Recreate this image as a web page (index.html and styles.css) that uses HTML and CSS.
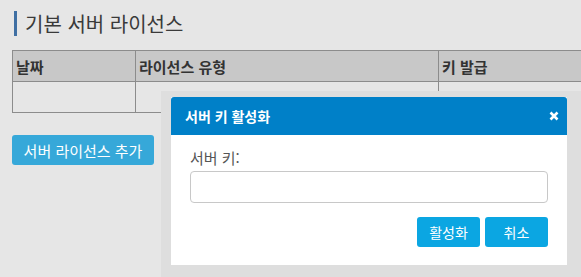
FILE: index.html
```html
<!DOCTYPE html>
<html lang="ko">

<head>
    <meta charset="UTF-8">
    <title>기본 서버 라이선스</title>
    <link rel="stylesheet" href="styles.css">
</head>

<body>

    <div class="page">
        <h1 class="title">기본 서버 라이선스</h1>

        <table class="lic">
            <thead>
                <tr>
                    <th class="c-date">날짜</th>
                    <th class="c-type">라이선스 유형</th>
                    <th class="c-key">키 발급</th>
                </tr>
            </thead>
            <tbody>
                <tr>
                    <td></td>
                    <td></td>
                    <td></td>
                </tr>
            </tbody>
        </table>

        <button class="add">서버 라이선스 추가</button>
    </div>

    <!-- activate dialog -->
    <div class="frame">
        <div class="dlg">
            <div class="dlg-head">
                <span>서버 키 활성화</span>
                <button class="close">
                    <svg width="10" height="10" viewBox="0 0 10 10">
                        <path d="M1.5 1.5 L8.5 8.5 M8.5 1.5 L1.5 8.5" stroke="#fff" stroke-width="2.6" />
                    </svg>
                </button>
            </div>
            <div class="dlg-body">
                <label class="labl" for="key">서버 키:</label>
                <input id="key" type="text">
                <div class="acts">
                    <button class="btn">활성화</button>
                    <button class="btn">취소</button>
                </div>
            </div>
        </div>
    </div>

</body>

</html>
```

FILE: styles.css
```css
body {
    background-color: #e6e6e6;
    margin: 0;
    overflow: hidden;
    font-family: 'Noto Sans CJK KR', 'Noto Sans', sans-serif;
}

.page {
    padding: 11px 0 0 12px;
}

.title {
    margin: 0 0 14px 2px;
    padding-left: 8px;
    border-left: 3px solid #3f6fa3;
    font-size: 20px;
    font-weight: normal;
    line-height: 25px;
    color: #3a3a3a;
}

.lic {
    border-collapse: collapse;
    width: 640px;
    table-layout: fixed;
}

.lic th,
.lic td {
    border: 1px solid #8c8c8c;
    height: 31px;
    padding: 0 3px;
    text-align: left;
    box-sizing: border-box;
}

.lic th {
    background-color: #c8c8c8;
    font-size: 15px;
    font-weight: bold;
    color: #333;
}

.c-date {
    width: 123px;
}

.c-type {
    width: 303px;
}

.add {
    margin-top: 22px;
    height: 30px;
    width: 142px;
    border: none;
    border-radius: 3px;
    background-color: #36a8d9;
    color: white;
    font-family: inherit;
    font-size: 15px;
    padding: 0;
}

.frame {
    position: absolute;
    left: 161px;
    top: 91px;
    width: 396px;
    padding: 6px 14px 12px 10px;
    background-color: #dedede;
}

.dlg {
    background-color: white;
}

.dlg-head {
    display: flex;
    align-items: center;
    justify-content: space-between;
    height: 38px;
    padding: 0 8px 0 14px;
    background-color: #0080c8;
    border-radius: 3px 3px 0 0;
    color: white;
    font-size: 14px;
    font-weight: bold;
}

.close {
    display: flex;
    border: none;
    background: none;
    padding: 0;
    margin-top: 0;
}

.dlg-body {
    display: flex;
    flex-direction: column;
    padding: 12px 19px 18px 19px;
}

.labl {
    font-size: 15px;
    color: #555;
    line-height: 21px;
}

input[type=text] {
    margin-top: 3px;
    height: 32px;
    border: 1px solid #c8c8c8;
    border-radius: 4px;
    box-sizing: border-box;
}

.acts {
    display: flex;
    justify-content: flex-end;
    gap: 5px;
    margin-top: 14px;
}

.btn {
    width: 63px;
    height: 30px;
    border: none;
    border-radius: 3px;
    background-color: #0ba6e2;
    color: white;
    font-family: inherit;
    font-size: 14px;
    padding: 0;
}
```
